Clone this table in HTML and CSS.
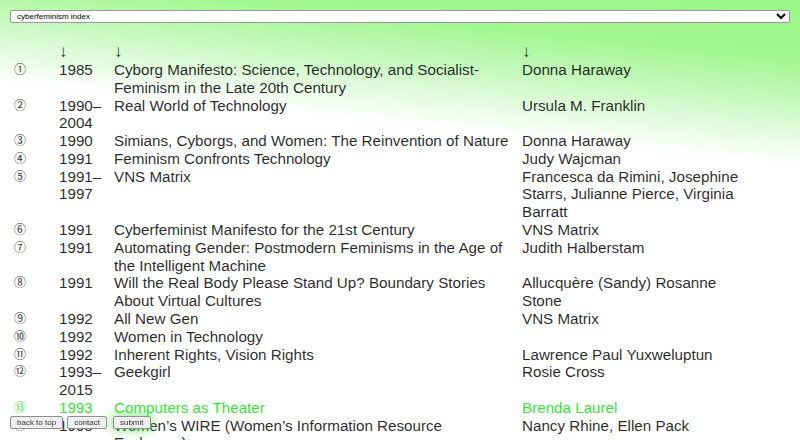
FILE: index.html
```html
<!DOCTYPE html>
<html lang="en">
<head>
<meta charset="utf-8">
<title>cyberfeminism index</title>
<link rel="stylesheet" href="styles.css">
</head>
<body>
<select class="nav-select">
  <option>cyberfeminism index</option>
</select>
<table class="index">
  <colgroup>
    <col class="c-num"><col class="c-year"><col class="c-title"><col class="c-author">
  </colgroup>
  <thead>
    <tr><th></th><th><span class="arrow">↓</span></th><th><span class="arrow">↓</span></th><th><span class="arrow">↓</span></th></tr>
  </thead>
  <tbody>
    <tr><td class="num">①</td><td>1985</td><td>Cyborg Manifesto: Science, Technology, and Socialist-Feminism in the Late 20th Century</td><td>Donna Haraway</td></tr>
    <tr><td class="num">②</td><td>1990–2004</td><td>Real World of Technology</td><td>Ursula M. Franklin</td></tr>
    <tr><td class="num">③</td><td>1990</td><td>Simians, Cyborgs, and Women: The Reinvention of Nature</td><td>Donna Haraway</td></tr>
    <tr><td class="num">④</td><td>1991</td><td>Feminism Confronts Technology</td><td>Judy Wajcman</td></tr>
    <tr><td class="num">⑤</td><td>1991–1997</td><td>VNS Matrix</td><td>Francesca da Rimini, Josephine Starrs, Julianne Pierce, Virginia Barratt</td></tr>
    <tr><td class="num">⑥</td><td>1991</td><td>Cyberfeminist Manifesto for the 21st Century</td><td>VNS Matrix</td></tr>
    <tr><td class="num">⑦</td><td>1991</td><td>Automating Gender: Postmodern Feminisms in the Age of the Intelligent Machine</td><td>Judith Halberstam</td></tr>
    <tr><td class="num">⑧</td><td>1991</td><td>Will the Real Body Please Stand Up? Boundary Stories About Virtual Cultures</td><td>Allucquère (Sandy) Rosanne Stone</td></tr>
    <tr><td class="num">⑨</td><td>1992</td><td>All New Gen</td><td>VNS Matrix</td></tr>
    <tr><td class="num">⑩</td><td>1992</td><td>Women in Technology</td><td></td></tr>
    <tr><td class="num">⑪</td><td>1992</td><td>Inherent Rights, Vision Rights</td><td>Lawrence Paul Yuxweluptun</td></tr>
    <tr><td class="num">⑫</td><td>1993–2015</td><td>Geekgirl</td><td>Rosie Cross</td></tr>
    <tr class="active"><td class="num">⑬</td><td>1993</td><td>Computers as Theater</td><td>Brenda Laurel</td></tr>
    <tr><td class="num">⑭</td><td>1993</td><td>Women’s WIRE (Women’s Information Resource Exchange)</td><td>Nancy Rhine, Ellen Pack</td></tr>
    <tr><td class="num">⑮</td><td>1994</td><td>Old Boys Network</td><td></td></tr>
  </tbody>
</table>
<div class="actions">
  <button class="btn">back to top</button>
  <button class="btn">contact</button>
  <button class="btn btn-submit">submit</button>
</div>
</body>
</html>
```
FILE: styles.css
```css
html {
  background-color: #fff;
  background-image: linear-gradient(186deg, #9af789 0px, #a2f791 60px, #cdf9c6 110px, #ffffff 165px);
  background-repeat: no-repeat;
  background-size: 100% 180px;
}
body {
  margin: 10px;
  font-family: "Liberation Sans", Arial, sans-serif;
  font-size: 15.2px;
  color: rgba(0, 0, 0, 0.85);
}
.nav-select {
  display: block;
  width: 100%;
  height: 13px;
  font-family: "Liberation Sans", Arial, sans-serif;
  font-size: 8px;
  padding: 0 2px;
  margin: 0 0 20px 0;
  background: #fff;
  border: 1px solid #999;
  border-radius: 2px;
}
.index {
  border-collapse: collapse;
  table-layout: fixed;
  width: 740px;
}
.c-num { width: 49px; }
.c-year { width: 55px; }
.c-title { width: 408px; }
.c-author { width: 228px; }
.index th, .index td {
  padding: 0;
  text-align: left;
  vertical-align: top;
  font-weight: normal;
  line-height: 17.78px;
}
.index th { line-height: 18px; }
.index td:nth-child(3) { padding-right: 13px; }
.arrow {
  font-family: "Liberation Sans", Arial, sans-serif;
  font-size: 17px;
  color: #1d3d1a;
}
.index .num {
  padding-left: 4px;
  font-family: "Noto Sans CJK JP", sans-serif;
  font-size: 12px;
  line-height: 15px;
  color: #333;
}
.active td, .index .active .num { color: #3ddf3d; }
.actions {
  position: fixed;
  left: 10px;
  bottom: 11px;
  display: flex;
  gap: 4px;
}
.btn {
  font-family: "Liberation Sans", Arial, sans-serif;
  font-size: 8px;
  line-height: 9px;
  padding: 1px 6px;
  color: #333;
  background: #efefef;
  border: 1px solid #8f8f8f;
  border-radius: 2px;
}
.btn-submit {
  margin-left: 2px;
  box-shadow: 0 0 8px 2px rgba(80, 230, 80, 0.6);
}
```
